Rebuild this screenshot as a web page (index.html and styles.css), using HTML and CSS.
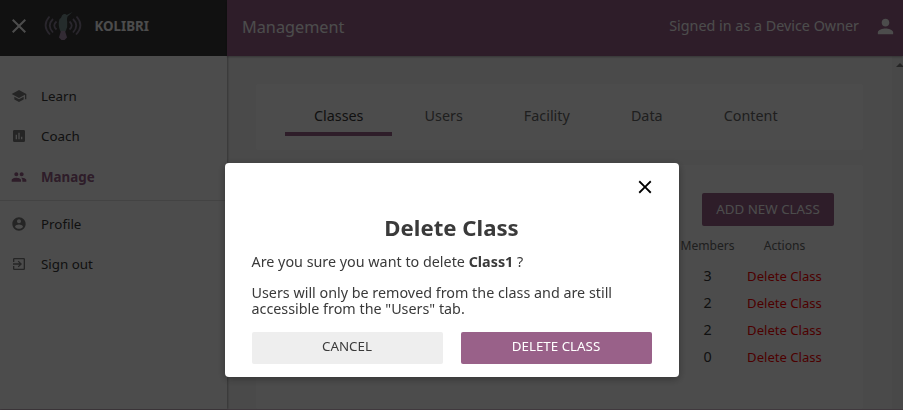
FILE: index.html
```html
<!DOCTYPE html>
<html lang="en">
<head>
<meta charset="utf-8">
<title>Kolibri</title>
<link rel="stylesheet" href="styles.css">
</head>
<body>
<div class="app">
  <aside class="sidebar">
    <div class="brand">
      <svg class="brand-close" width="24" height="24" viewBox="0 0 24 24"><path d="M19 6.410 17.590 5 12 10.590 6.410 5 5 6.410 10.590 12 5 17.590 6.410 19 12 13.410 17.590 19 19 17.590 13.410 12z"/></svg>
      <svg class="brand-logo" width="38" height="30" viewBox="0 0 38 30">
        <g fill="none" stroke="#8b8096" stroke-width="1.800">
          <path d="M12.500 10.500Q8 14.500 12.500 18.500M9 8Q2.500 14.500 9 21.500M5.500 5.500Q-2.500 14.500 6 23.500"/>
          <path d="M25.500 10.500Q30 14.500 25.500 18.500M29 8Q35.500 14.500 29 21.500M32.500 5.500Q40.500 14.500 32 23.500"/>
        </g>
        <path fill="#7d9595" d="M28.500 1 23.500 5.500Q22.500 7.500 23.200 11Q24 16 21.500 20.500L16.500 20.500Q13.500 14 15.500 8Q17.500 7 18 4.500Q20.500 2 22.800 4z"/>
        <path fill="#a88fb0" d="M17 20h4l2 6.500-2.500 2.500h-3l-2.500-2.500z"/>
      </svg>
      <span class="brand-name">KOLIBRI</span>
    </div>
    <nav class="menu">
      <a class="menu-item"><svg width="16" height="16" viewBox="0 0 24 24"><path d="M5 13.180v4L12 21l7-3.820v-4L12 17l-7-3.820zM12 3 1 9l11 6 9-4.910V17h2V9L12 3z"/></svg>Learn</a>
      <a class="menu-item"><svg width="16" height="16" viewBox="0 0 24 24"><path d="M19 3H5a2 2 0 0 0-2 2v14a2 2 0 0 0 2 2h14a2 2 0 0 0 2-2V5a2 2 0 0 0-2-2zM9 17H7v-7h2v7zm4 0h-2V7h2v10zm4 0h-2v-4h2v4z"/></svg>Coach</a>
      <a class="menu-item active"><svg width="16" height="16" viewBox="0 0 24 24"><path d="M16 11c1.660 0 2.990-1.340 2.990-3S17.660 5 16 5s-3 1.340-3 3 1.340 3 3 3zm-8 0c1.660 0 2.990-1.340 2.990-3S9.660 5 8 5 5 6.340 5 8s1.340 3 3 3zm0 2c-2.330 0-7 1.170-7 3.500V19h14v-2.500c0-2.330-4.670-3.500-7-3.500zm8 0c-.29 0-.62.02-.97.050 1.160.84 1.970 1.970 1.970 3.450V19h6v-2.500c0-2.330-4.670-3.500-7-3.500z"/></svg>Manage</a>
      <hr class="menu-divider">
      <a class="menu-item"><svg width="16" height="16" viewBox="0 0 24 24"><path d="M12 2C6.480 2 2 6.480 2 12s4.480 10 10 10 10-4.480 10-10S17.520 2 12 2zm0 3c1.660 0 3 1.340 3 3s-1.340 3-3 3-3-1.340-3-3 1.340-3 3-3zm0 14.200c-2.500 0-4.710-1.280-6-3.220.03-1.990 4-3.080 6-3.080 1.990 0 5.970 1.090 6 3.080-1.290 1.940-3.500 3.220-6 3.220z"/></svg>Profile</a>
      <a class="menu-item"><svg width="16" height="16" viewBox="0 0 24 24"><path d="M10.090 15.590 11.500 17l5-5-5-5-1.410 1.410L12.670 11H3v2h9.670l-2.580 2.590zM19 3H5a2 2 0 0 0-2 2v4h2V5h14v14H5v-4H3v4a2 2 0 0 0 2 2h14a2 2 0 0 0 2-2V5a2 2 0 0 0-2-2z"/></svg>Sign out</a>
    </nav>
  </aside>
  <div class="main">
    <header class="topbar">
      <span class="topbar-title">Management</span>
      <span class="topbar-user">Signed in as a Device Owner</span>
      <svg width="23" height="23" viewBox="0 0 24 24"><path d="M12 12c2.210 0 4-1.790 4-4s-1.790-4-4-4-4 1.790-4 4 1.790 4 4 4zm0 2c-2.670 0-8 1.340-8 4v2h16v-2c0-2.660-5.330-4-8-4z"/></svg>
    </header>
    <div class="body">
      <main class="content">
        <nav class="tabs card">
          <a class="tab current">Classes</a>
          <a class="tab">Users</a>
          <a class="tab">Facility</a>
          <a class="tab">Data</a>
          <a class="tab">Content</a>
        </nav>
        <section class="classes card">
          <button class="btn add">ADD NEW CLASS</button>
          <div class="table">
            <span class="th">Members</span><span class="th">Actions</span>
            <span>3</span><a class="danger">Delete Class</a>
            <span>2</span><a class="danger">Delete Class</a>
            <span>2</span><a class="danger">Delete Class</a>
            <span>0</span><a class="danger">Delete Class</a>
          </div>
        </section>
      </main>
      <div class="scrollbar"><svg width="8" height="4" viewBox="0 0 8 4"><path d="M0 4 4 0l4 4z"/></svg></div>
    </div>
  </div>
</div>
<div class="overlay">
  <div class="dialog" role="dialog">
    <svg class="dialog-close" width="22" height="22" viewBox="0 0 24 24"><path d="M19 6.410 17.590 5 12 10.590 6.410 5 5 6.410 10.590 12 5 17.590 6.410 19 12 13.410 17.590 19 19 17.590 13.410 12z"/></svg>
    <h1 class="dialog-title">Delete Class</h1>
    <p class="question">Are you sure you want to delete <strong>Class1</strong> ?</p>
    <p class="note">Users will only be removed from the class and are still accessible from the "Users" tab.</p>
    <div class="dialog-actions">
      <button class="btn cancel">CANCEL</button>
      <button class="btn confirm">DELETE CLASS</button>
    </div>
  </div>
</div>
</body>
</html>
```
FILE: styles.css
```css
* { box-sizing: border-box; }
body {
  margin: 0;
  height: 410px;
  overflow: hidden;
  font: 14.330px/16px "Noto Sans", sans-serif;
  color: #3a3a3a;
}
.app { display: flex; height: 410px; border-bottom: 1px solid #d8bfcf; background: #f9f9f9; }
.sidebar { width: 227px; flex: none; background: #fff; z-index: 1; box-shadow: 1px 0 2px rgba(0,0,0,.3); }
.brand { height: 56px; display: flex; align-items: center; padding: 0 0 4px 7px; background: #3a3a3a; color: #fff; }
.brand svg, .topbar svg { fill: #fff; flex: none; }
.brand-logo { margin-left: 13px; }
.brand-name { margin-left: 12.500px; font-weight: 700; font-size: 13.300px; }
.menu { padding-top: 20px; font-size: 13.350px; }
.menu-item { display: flex; align-items: center; height: 40.300px; padding-left: 11px; gap: 14px; color: #3a3a3a; }
.menu-item svg { fill: #7c7c7c; }
.menu-item.active { color: #996189; font-weight: 700; }
.menu-item.active svg { fill: #996189; }
.menu-divider { border: 0; border-top: 1px solid #e2e2e2; margin: 3px 0; }
.main { flex: 1; display: flex; flex-direction: column; min-width: 0; }
.topbar { height: 56px; flex: none; display: flex; align-items: center; padding: 0 6px 4px 15px; background: #996189; color: #fff; box-shadow: 0 1px 2px rgba(0,0,0,.3); z-index: 1; }
.topbar-title { font-size: 16.250px; margin: 2px auto 0 0; }
.topbar-user { margin-right: 15px; }
.body { flex: 1; display: flex; min-height: 0; }
.content { flex: 1; padding: 28px 29px 0; display: flex; flex-direction: column; gap: 15px; }
.card { background: #fff; border-radius: 3px; }
.tabs { height: 66px; flex: none; display: flex; align-items: flex-start; gap: 3.100px; padding: 24px 29px 0; }
.tab { padding: 0 29px; height: 28px; color: #686868; }
.tab.current { color: #3a3a3a; border-bottom: 4px solid #996189; }
.classes { flex: 1; padding: 28px 29px 0; display: flex; flex-direction: column; align-items: flex-end; }
.btn { border: 0; border-radius: 2px; height: 32px; padding: 0; font: 13.350px "Noto Sans", sans-serif; }
.add { width: 132px; height: 33px; padding-bottom: 2px; flex: none; background: #996189; color: #fff; }
.table { display: grid; grid-template-columns: 70px 84px; grid-template-rows: 26px repeat(4, 27px); align-items: center; justify-items: center; margin: 10px 7.500px 0 0; }
.th { font-size: 12.100px; color: #686868; padding-bottom: 6px; }
.danger { color: red; font-size: 13.100px; }
.scrollbar { width: 11px; background: #f1f1f1; padding: 6px 0 0 4px; line-height: 0; }
.scrollbar svg { fill: #7c7c7c; }
.overlay { position: fixed; inset: 0; z-index: 10; display: flex; justify-content: center; align-items: flex-start; padding-top: 163px; background: rgba(0,0,0,.7); }
.dialog { width: 454px; height: 214px; display: flex; flex-direction: column; padding: 13px 27px; border-radius: 4px; background: #fff; box-shadow: 0 2px 8px rgba(0,0,0,.33); }
.dialog-close { align-self: flex-end; margin-right: -4px; }
.dialog-title { margin: 16px 0 0; text-align: center; font-size: 22.200px; line-height: 28px; }
.question { margin: 12px 0 15px; }
.note { margin: 0 0 15px; }
.dialog-actions { display: flex; gap: 18px; }
.dialog-actions .btn { flex: 1; padding-bottom: 4px; }
.cancel { background: #eee; color: #3a3a3a; }
.confirm { background: #996189; color: #fff; }
```
